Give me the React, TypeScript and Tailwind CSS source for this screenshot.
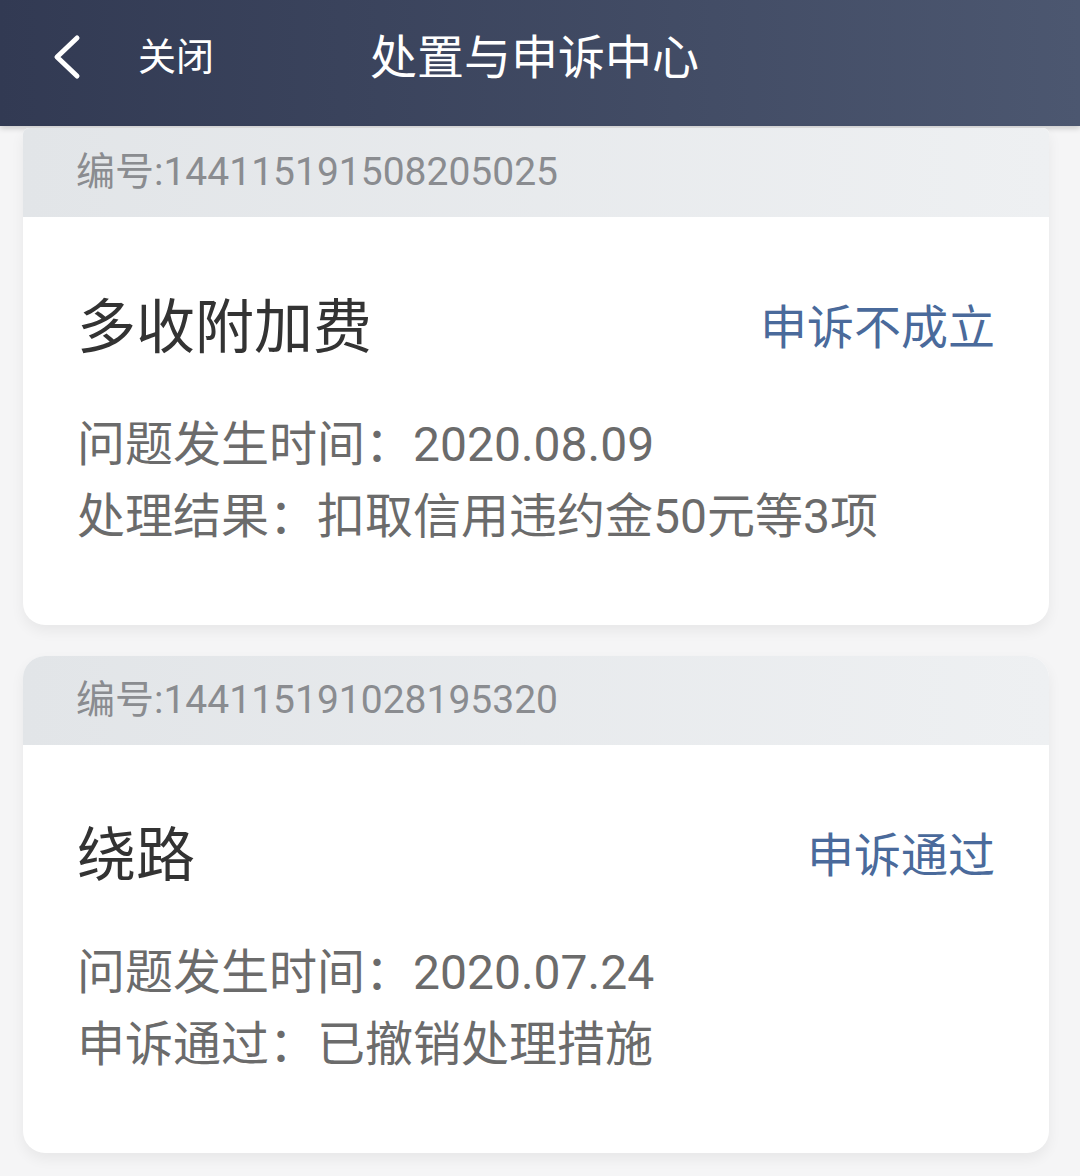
type Record = {
  id: string;
  title: string;
  status: string;
  time: string;
  label: string;
  result: string;
};

const records: Record[] = [
  {
    id: "144115191508205025",
    title: "多收附加费",
    status: "申诉不成立",
    time: "2020.08.09",
    label: "处理结果",
    result: "扣取信用违约金50元等3项",
  },
  {
    id: "144115191028195320",
    title: "绕路",
    status: "申诉通过",
    time: "2020.07.24",
    label: "申诉通过",
    result: "已撤销处理措施",
  },
];

const font = "font-['Roboto','Noto_Sans_CJK_SC',sans-serif]";

function RecordCard({ r, first }: { r: Record; first?: boolean }) {
  return (
    <div
      className={`ml-[23px] mr-[31px] overflow-hidden bg-white shadow-[0_6px_14px_rgba(0,0,0,0.06)] ${
        first ? "rounded-b-[22px] rounded-t-[6px]" : "rounded-[22px]"
      }`}
    >
      <div className="flex h-[89px] items-center bg-gradient-to-r from-[#e2e5e8] to-[#eef0f2] pl-[53px] text-[39px] leading-none text-[#8a8c90]">
        编号:{r.id}
      </div>
      <div className="pb-[72px] pl-[54px] pr-[54px] pt-[80px]">
        <div className="flex items-center justify-between">
          <span className="text-[59px] leading-[62px] text-[#333333]">{r.title}</span>
          <span className="text-[47px] leading-[62px] text-[#4a6a9b]">{r.status}</span>
        </div>
        <div className="mt-[50px] text-[48px] leading-[72px] text-[#6b6b6b]">
          <div>问题发生时间：{r.time}</div>
          <div>
            {r.label}：{r.result}
          </div>
        </div>
      </div>
    </div>
  );
}

export default function App() {
  return (
    <div className={`min-h-[1176px] w-[1080px] bg-[#f5f5f6] ${font}`}>
      <div className="flex h-[126px] items-center bg-gradient-to-r from-[#323a53] to-[#4c5770] pb-[12px] shadow-[0_2px_6px_rgba(0,0,0,0.2)]">
        <svg
          className="ml-[50px] h-[46px] w-[32px]"
          viewBox="0 0 32 46"
          fill="none"
          stroke="white"
          strokeWidth="5"
          strokeLinecap="round"
          strokeLinejoin="round"
        >
          <polyline points="27,4 7,23 27,42" />
        </svg>
        <span className="ml-[56px] text-[38px] leading-none text-white">关闭</span>
        <span className="ml-[156px] text-[47px] leading-none text-white">处置与申诉中心</span>
      </div>
      <div className="flex flex-col gap-[31px] pb-[24px] pt-[2px]">
        {records.map((r, i) => (
          <RecordCard key={r.id} r={r} first={i === 0} />
        ))}
      </div>
    </div>
  );
}
